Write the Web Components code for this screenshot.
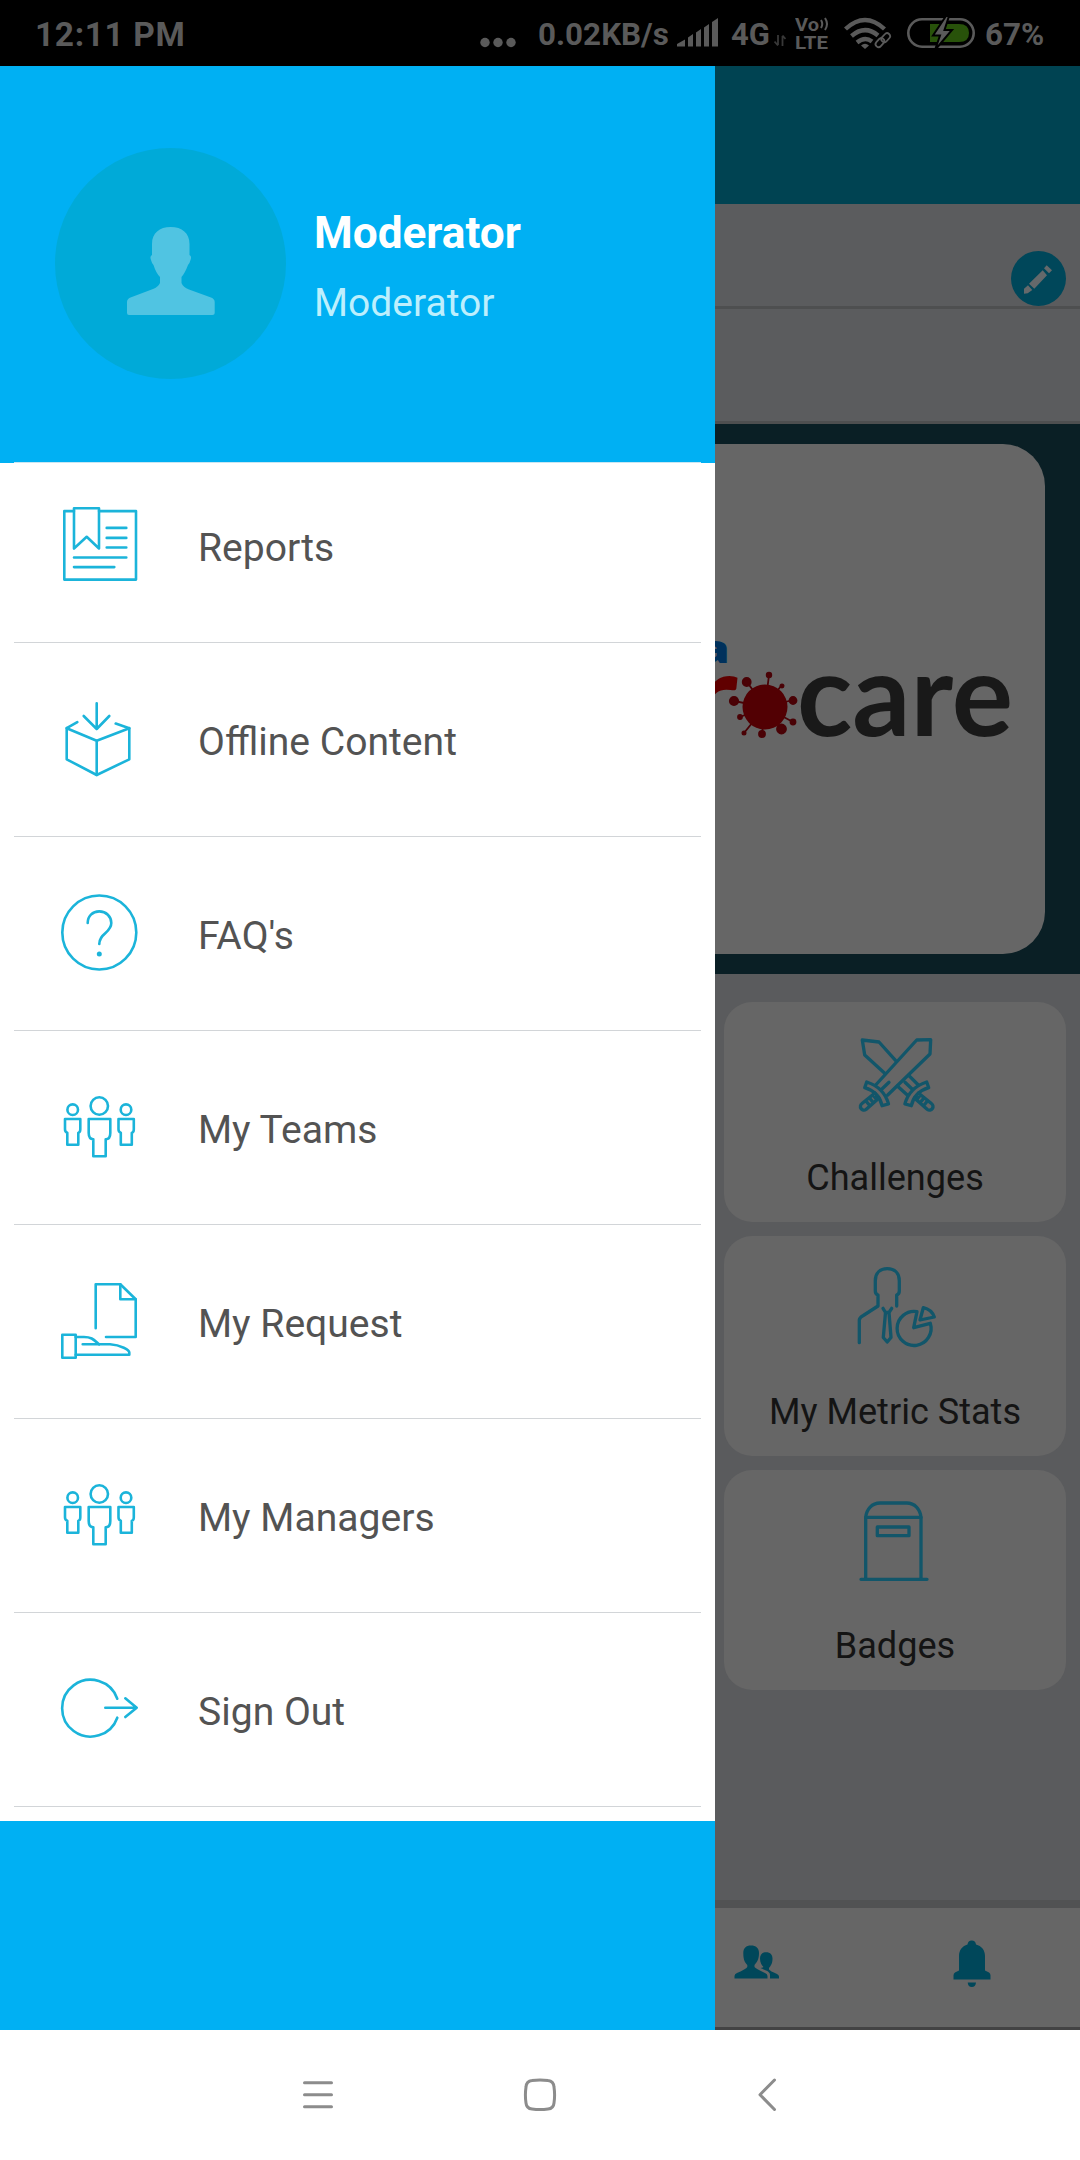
<!DOCTYPE html>
<html lang="en">
<head>
<meta charset="UTF-8">
<meta name="viewport" content="width=device-width, initial-scale=1.0">
<title>Menu</title>
<style>
  body {
    margin: 0;
    font-family: Roboto, "Liberation Sans", sans-serif;
    background: #fff;
  }
</style>
</head>
<body>
<phone-screen>
  <status-bar slot="status"></status-bar>

  <side-drawer slot="drawer">
    <user-card slot="user" name="Moderator" role-name="Moderator"></user-card>
    <menu-item icon="reports">Reports</menu-item>
    <menu-item icon="offline">Offline Content</menu-item>
    <menu-item icon="faq">FAQ's</menu-item>
    <menu-item icon="people">My Teams</menu-item>
    <menu-item icon="request">My Request</menu-item>
    <menu-item icon="people">My Managers</menu-item>
    <menu-item icon="signout">Sign Out</menu-item>
  </side-drawer>

  <home-page slot="page">
    <brand-banner slot="banner"></brand-banner>
    <home-tile icon="swords">Challenges</home-tile>
    <home-tile icon="metrics">My Metric Stats</home-tile>
    <home-tile icon="badges">Badges</home-tile>
  </home-page>

  <system-nav slot="nav"></system-nav>
</phone-screen>

<script>
// Line icons used by the drawer rows and by the tiles
const person = `
  <path d="M5 32H20.3V42.3Q20.3 45.5 18.3 45.7V57.7H7.3V45.7Q5 45 5 42.3Z"/>`;

const ICONS = {
  reports: `
    <path d="M14 6.1H4.3V74.6H76V6.1H39"/>
    <path d="M14 3.2H39V43.5L26.7 31.8L14 43.5Z"/>
    <path d="M46.7 22.9H66.3M46.7 32.9H66.3M46.7 42.5H66.3M14 52.5H66.3M14 62.1H54.3"/>`,
  offline: `
    <path d="M36.7 4.2V30M23.7 17L36.7 30L49.3 17"/>
    <path d="M17.3 23.1L6.7 29.2V60.3L36.7 76L69.3 60.3V29.2L55.7 24.6"/>
    <path d="M6.7 29.2L36.7 41.7L69.3 29.2M36.7 41.7V76"/>`,
  faq: `
    <circle cx="39.3" cy="39.5" r="37"/>
    <path d="M27.7 30C27.7 23 32.5 18.4 39.3 18.4S51.3 23.5 51.3 30C51.3 40 39.3 40 39.3 51"/>
    <circle cx="39.3" cy="61" r="2.5" fill="currentColor" stroke="none"/>`,
  people: `
    <circle cx="39.3" cy="19" r="8.7"/>
    <circle cx="12.7" cy="22.7" r="5.3"/>
    <circle cx="66" cy="22.7" r="5.3"/>
    <path d="M28.7 32H50.3V46Q50.3 52.3 45.7 52.3V69.3H33.3V52.3Q28.7 52 28.7 46Z"/>
    ${person}
    <g transform="translate(53.5 0)">${person}</g>`,
  request: `
    <path d="M35.7 47.3V3.3H60.3L75.7 18.3V56H46"/>
    <path d="M60.3 3.3V18.3H75.7"/>
    <path d="M2.3 53.7H15.7V76.7H2.3Z"/>
    <path d="M15.7 56H24C32 56 34 59 39 63.3"/>
    <path d="M22.7 63.3H50C61 64 69.3 69 69.3 71.5V73.7H15.7"/>`,
  signout: `
    <path d="M57.3 29.7A28.4 28.4 0 1 0 57.3 48.7"/>
    <path d="M45.3 38.7H76.7M65.3 29.3L76.7 38.7L65.3 48"/>`,
  swords: `
    <path d="M20.7 53L61.7 8L75.7 7.7L75 22L32.7 63"/>
    <path d="M40.7 28.7L24 10L7.3 8L9.7 23L29.7 41.3"/>
    <path d="M53.7 43.3L63.3 53M42.3 54L52.3 63M34 50.3L26.7 57.3M50 50.3L57.3 57.3"/>
    <path d="M11.7 50C21 53 30 59 33.5 72L27 73.7C25 64 19 58.5 9.7 55.7Z"/>
    <path d="M71.7 50C62.4 53 53.4 59 49.9 72L56.4 73.7C58.4 64 64.4 58.5 73.7 55.7Z"/>
    <path d="M20 61L7 71.5A3.4 3.4 0 0 0 11 77.5L24 66M11 69L15 74M14.5 66L18.5 71M18 63L22 68"/>
    <path d="M63.4 61L76.4 71.5A3.4 3.4 0 0 1 72.4 77.5L59.4 66M72.4 69L68.4 74M68.9 66L64.9 71M65.4 63L61.4 68"/>`,
  metrics: `
    <path d="M4.3 76.7V54Q4.5 51.5 8.3 49.5L23 40V29Q20.3 28 20.3 25V14.7C20.3 7 25 2.7 32.3 2.7S44.3 7 44.3 14.7V25Q44.3 28 41.7 29V40"/>
    <path d="M28 42.3L30.5 46.5L28.3 71.5L32.2 76L36 71.5L34 46.5L36.7 42.3M30.5 46.5H34"/>
    <path d="M62 45.7A17 17 0 1 0 75.3 57.3L58.7 61.7Z"/>
    <path d="M68.3 41.7L65 54L79.3 51Q76.5 43.5 68.3 41.7Z"/>`,
  badges: `
    <path d="M10.7 79.3V17.3C11.5 9 17 3 25 3H51.7C59.7 3 65.2 9 66 17.3V79.3"/>
    <path d="M10.7 17.3H66M6 79.3H72M22.3 27H54V35.7H22.3Z"/>`
};

// <line-icon name="faq">: picks one of the drawings above
class LineIcon extends HTMLElement {
  constructor() {
    super();
    this.attachShadow({ mode: "open" });
  }

  connectedCallback() {
    this.shadowRoot.innerHTML = `
      <style>
        :host { display: block; width: 80px; height: 84px; }
        svg {
          display: block;
          overflow: visible;
          fill: none;
          stroke: currentColor;
          stroke-width: var(--icon-stroke, 2.6);
          stroke-linecap: round;
          stroke-linejoin: round;
        }
      </style>
      <svg width="80" height="84" viewBox="0 0 80 84">${ICONS[this.getAttribute("name")]}</svg>
    `;
  }
}
customElements.define("line-icon", LineIcon);

class PhoneScreen extends HTMLElement {
  constructor() {
    super();
    this.attachShadow({ mode: "open" });
    this.shadowRoot.innerHTML = `
      <style>
        :host {
          display: flex;
          flex-direction: column;
          width: 1080px;
          height: 2160px;
          overflow: hidden;
        }
        main { display: flex; height: 1964px; }
      </style>
      <slot name="status"></slot>
      <main>
        <slot name="drawer"></slot>
        <slot name="page"></slot>
      </main>
      <slot name="nav"></slot>
    `;
  }
}
customElements.define("phone-screen", PhoneScreen);

class StatusBar extends HTMLElement {
  constructor() {
    super();
    this.attachShadow({ mode: "open" });
  }

  connectedCallback() {
    this.render();
  }

  render() {
    this.shadowRoot.innerHTML = `
      <style>
        :host {
          display: flex;
          box-sizing: border-box;
          justify-content: space-between;
          height: 66px;
          padding: 0 36px 0 35px;
          background: #000;
          color: #5a5a5a;
          font-size: 33.5px;
          font-weight: 700;
          line-height: 69px;
          white-space: nowrap;
        }
        .right { display: flex; }
        span, svg { display: block; flex: none; }
        .time { letter-spacing: 0.6px; }
        .dots { width: 37px; }
        .speed { width: 130px; margin-left: 21px; font-size: 31.4px; }
        .bars { margin-left: 9px; }
        .net { width: 37px; margin-left: 13px; font-size: 31px; }
        .arrows { margin-left: 6px; }
        .volte { margin-left: 9px; }
        .wifi { margin-left: 15px; }
        .battery { margin-left: 15px; }
        .percent { width: 59px; margin-left: 10px; font-size: 31.4px; }
      </style>
      <span class="time">12:11 PM</span>
      <div class="right">
        <svg class="dots" width="37" height="66" fill="currentColor">
          <circle cx="5" cy="42.5" r="4.7"/><circle cx="18" cy="42.5" r="4.7"/><circle cx="31" cy="42.5" r="4.7"/>
        </svg>
        <span class="speed">0.02KB/s</span>
        <svg class="bars" width="41" height="66" fill="currentColor">
          <path d="M0 46.5V44L8 39.500V46.500ZM11 37.500L16 34V46.500H11ZM19 32.500L24 29V46.500H19ZM27 27.500L32 24V46.500H27ZM35 22L41 18V46.500H35Z"/>
        </svg>
        <span class="net">4G</span>
        <svg class="arrows" width="12" height="66" stroke="#383838" stroke-width="1.8" fill="none">
          <path d="M4 35V45M0.500 41.500L4 45.500M8.500 46V36M8.500 35.500L11.500 39"/>
        </svg>
        <svg class="volte" width="34" height="66" fill="currentColor">
          <text x="0" y="31" font-size="18" textLength="24" lengthAdjust="spacingAndGlyphs">Vo</text>
          <text x="0" y="48.500" font-size="18.500" textLength="33" lengthAdjust="spacingAndGlyphs">LTE</text>
          <path d="M26 20Q28.500 24 26 28M30 18Q34 24 30 30" fill="none" stroke="currentColor" stroke-width="2"/>
        </svg>
        <svg class="wifi" width="48" height="66" fill="none" stroke="currentColor" stroke-width="4.400">
          <path d="M1.500 29Q21 11 40.500 29M7.500 36Q21 24.500 34 35.500M13 42.500Q21 36 28 41.500"/>
          <path d="M17 45.500Q21 42 25 45.500L21 49Z" fill="currentColor" stroke="none"/>
          <g stroke-width="1.800" transform="rotate(-48 39 40)">
            <rect x="30" y="36.500" width="10" height="6" rx="3"/>
            <rect x="37.500" y="37.500" width="10" height="6" rx="3"/>
          </g>
        </svg>
        <svg class="battery" width="68" height="66">
          <path d="M23 24H52Q62 24 62 33T52 42H23Z" fill="#28520a"/>
          <rect x="1.300" y="19.300" width="65.400" height="27.400" rx="13.700" fill="none" stroke="currentColor" stroke-width="2.600"/>
          <path d="M39 16L26 35.500H33L28 50L45 30H37.500L42 16Z" fill="currentColor" stroke="#000" stroke-width="2"/>
        </svg>
        <span class="percent">67%</span>
      </div>
    `;
  }
}
customElements.define("status-bar", StatusBar);

class SideDrawer extends HTMLElement {
  constructor() {
    super();
    this.attachShadow({ mode: "open" });
    this.shadowRoot.innerHTML = `
      <style>
        :host {
          display: flex;
          flex: none;
          flex-direction: column;
          width: 715px;
          background: #00b0f3;
        }
        nav {
          display: flex;
          flex-direction: column;
          background: #fff;
          padding-bottom: 14px;
        }
      </style>
      <slot name="user"></slot>
      <nav><slot></slot></nav>
    `;
  }
}
customElements.define("side-drawer", SideDrawer);

class UserCard extends HTMLElement {
  constructor() {
    super();
    this.attachShadow({ mode: "open" });
  }

  connectedCallback() {
    this.render();
  }

  render() {
    this.shadowRoot.innerHTML = `
      <style>
        :host {
          display: flex;
          flex-direction: column;
          height: 397px;
        }
        .row {
          display: flex;
          flex: 1;
          align-items: flex-start;
          gap: 28px;
          padding: 82px 0 0 55px;
        }
        .avatar {
          display: flex;
          justify-content: center;
          width: 231px;
          height: 231px;
          border-radius: 50%;
          background: #00aad8;
        }
        svg { margin-top: 79px; }
        .text { padding-top: 55px; }
        p { margin: 0; }
        .name {
          color: #fff;
          font-size: 44.2px;
          font-weight: 700;
          line-height: 60px;
        }
        .role {
          margin-top: 12px;
          color: #bdeffd;
          font-size: 39px;
          line-height: 56px;
        }
        .line { height: 1px; margin: 0 14px; background: #c9e6f2; }
      </style>
      <div class="row">
        <div class="avatar">
          <svg width="88" height="88" viewBox="0 0 88 88" fill="#50c4e2">
            <path d="M43.700 0C55 0 62.500 6 62.500 17V28Q65 29 63.500 33Q62.500 37 61 38Q58 46 54.500 50V56Q56 60 62 62.500L84 70.500Q87.700 72 87.700 75V86Q87.700 88 85.500 88H2Q0 88 0 86V75Q0 72 3.500 70.500L26 62Q31 60 33 56V50Q29 46 26.500 38Q25 37 24 33Q22.500 29 25 28V17C25 6 32.500 0 43.700 0Z"/>
          </svg>
        </div>
        <div class="text">
          <p class="name">${this.getAttribute("name")}</p>
          <p class="role">${this.getAttribute("role-name")}</p>
        </div>
      </div>
      <div class="line"></div>
    `;
  }
}
customElements.define("user-card", UserCard);

class MenuItem extends HTMLElement {
  constructor() {
    super();
    this.attachShadow({ mode: "open" });
  }

  connectedCallback() {
    this.render();
  }

  render() {
    this.shadowRoot.innerHTML = `
      <style>
        :host {
          display: flex;
          box-sizing: border-box;
          align-items: flex-end;
          height: 194px;
          margin: 0 14px;
          padding: 0 0 53px 46px;
          border-bottom: 1px solid #d2d5d8;
          color: #535353;
          font-size: 39.1px;
          line-height: 71px;
        }
        :host(:first-of-type) { height: 180px; }
        line-icon { color: #1bb4da; }
        span { margin: 0 0 5px 58px; white-space: nowrap; }
      </style>
      <line-icon name="${this.getAttribute("icon")}"></line-icon>
      <span><slot></slot></span>
    `;
  }
}
customElements.define("menu-item", MenuItem);

class HomePage extends HTMLElement {
  constructor() {
    super();
    this.attachShadow({ mode: "open" });
    this.shadowRoot.innerHTML = `
      <style>
        :host {
          display: flex;
          flex: 1;
          flex-direction: column;
          background: #5a5b5d;
        }
        .toolbar { height: 138px; background: #004352; }
        .profile {
          display: flex;
          box-sizing: border-box;
          align-items: flex-end;
          justify-content: flex-end;
          height: 105px;
          padding: 0 14px 3px;
          border-bottom: 3px solid #4e4f50;
          background: #5b5c5e;
        }
        .profile svg { margin-bottom: -3px; }
        .points {
          box-sizing: border-box;
          height: 115px;
          border-bottom: 3px solid #4e4f50;
          background: #5b5c5e;
        }
        .tiles {
          display: flex;
          flex: 1;
          flex-direction: column;
          gap: 14px;
          padding: 28px 14px 0 9px;
        }
        footer {
          display: flex;
          box-sizing: border-box;
          justify-content: space-between;
          height: 130px;
          padding: 0 89px 0 19px;
          border-top: 8px solid #515253;
          border-bottom: 3px solid #434344;
          background: #666;
          fill: #00475a;
        }
        .friends { margin-top: 37px; }
        .bell { margin-top: 32px; }
      </style>
      <div class="toolbar"></div>
      <div class="profile">
        <svg width="55" height="55" viewBox="0 0 55 55">
          <circle cx="27.500" cy="27.500" r="27.500" fill="#00475a"/>
          <path fill="#65696b" d="M35.700 14.300L41 19.300L38 22.300L33 17.300ZM31.700 19.300L36 24.300L23.300 37.700L18 32.700ZM17 34.300L21.300 39L16.700 42.300L13 42.700V37.700Z"/>
        </svg>
      </div>
      <div class="points"></div>
      <slot name="banner"></slot>
      <div class="tiles"><slot></slot></div>
      <footer>
        <svg class="friends" width="46" height="34" viewBox="0 0 46 34">
          <path d="M17 0.500C22 0.500 25 3 25 8C25 15 22.500 17.500 20.500 20V22Q22 24 31 28Q33.500 29 33.500 31V33.500H0.500V31Q0.500 29 3 28Q12 24 13.300 22V20C11 17.500 9.300 15 9.300 8C9.300 3 12 0.500 17 0.500Z"/>
          <path d="M32 7.300C36.500 7.300 38.500 10 38.500 13.500C38.500 19 36.500 21 35 23V24.500Q36 26 43 29Q45 30 45 31.500V33.500H36V30Q36 27 32 25.500L26.500 23Q29.500 22.500 29.500 22C27.500 20 26 17.500 26 13.500C26 10 28 7.300 32 7.300Z"/>
        </svg>
        <svg class="bell" width="38" height="48" viewBox="0 0 38 48">
          <path d="M18.700 0.500Q22.500 0.500 23 4.500C28.500 6 32 10 32 16V30.500L36 32.500Q37.500 33.500 37.500 35.500V39.500H0.500V35.500Q0.500 33.500 2 32.500L6 30.500V16C6 10 9.500 6 14.500 4.500Q15 0.500 18.700 0.500Z"/>
          <path d="M14.700 42.500H23Q22.500 47 18.800 47T14.700 42.500Z"/>
        </svg>
      </footer>
    `;
  }
}
customElements.define("home-page", HomePage);

// Banner card with the logo; its left part goes under the drawer
class BrandBanner extends HTMLElement {
  constructor() {
    super();
    this.attachShadow({ mode: "open" });
  }

  connectedCallback() {
    this.render();
  }

  render() {
    this.shadowRoot.innerHTML = `
      <style>
        :host {
          display: block;
          box-sizing: border-box;
          height: 550px;
          padding: 20px 35px 20px 0;
          background: #0a1f25;
        }
        .card {
          height: 510px;
          overflow: hidden;
          border-radius: 0 42px 42px 0;
          background: #666;
        }
        svg { display: block; }
      </style>
      <div class="card">
        <svg width="330" height="510" viewBox="0 0 330 510">
          <text x="-18" y="218.500" font-family="Open Sans" font-weight="800" font-size="38" textLength="33" lengthAdjust="spacingAndGlyphs" fill="#00315c">a</text>
          <text x="-30" y="292" font-family="Lato" font-weight="700" font-size="114" textLength="53" lengthAdjust="spacingAndGlyphs" fill="#600000">r</text>
          <g stroke="#4a0206" stroke-width="1.800" fill="#4a0206">
            <path d="M50 263L54 231M50 263L32 238M50 263L66 242M50 263L19 257M50 263L78 256M50 263L25 273M50 263L78 278M50 263L66 285M50 263L29 289M50 263L47 290"/>
            <circle cx="54" cy="231" r="2.300"/><circle cx="31.700" cy="238" r="4"/><circle cx="67" cy="242" r="1.600"/>
            <circle cx="19" cy="257" r="4.200"/><circle cx="78" cy="256.500" r="3.500"/><circle cx="25" cy="273" r="2"/>
            <circle cx="78" cy="278" r="2.500"/><circle cx="66.500" cy="285" r="4.500"/><circle cx="29" cy="289" r="1.600"/>
            <circle cx="47" cy="290" r="3"/>
          </g>
          <circle cx="50" cy="263" r="22.500" fill="#520003"/>
          <text x="82" y="292" font-family="Lato" font-weight="700" font-size="114" textLength="216" lengthAdjust="spacingAndGlyphs" fill="#191919">care</text>
        </svg>
      </div>
    `;
  }
}
customElements.define("brand-banner", BrandBanner);

class HomeTile extends HTMLElement {
  constructor() {
    super();
    this.attachShadow({ mode: "open" });
  }

  connectedCallback() {
    this.render();
  }

  render() {
    this.shadowRoot.innerHTML = `
      <style>
        :host {
          display: flex;
          box-sizing: border-box;
          flex-direction: column;
          align-items: center;
          height: 220px;
          padding-top: 30px;
          border-radius: 28px;
          background: #666;
          color: #141414;
          font-size: 36.1px;
          line-height: 50px;
          --icon-stroke: 3.3;
        }
        line-icon { color: #12566a; }
        span { margin-top: 37px; white-space: nowrap; }
      </style>
      <line-icon name="${this.getAttribute("icon")}"></line-icon>
      <span><slot></slot></span>
    `;
  }
}
customElements.define("home-tile", HomeTile);

class SystemNav extends HTMLElement {
  constructor() {
    super();
    this.attachShadow({ mode: "open" });
    this.shadowRoot.innerHTML = `
      <style>
        :host {
          display: flex;
          box-sizing: border-box;
          align-items: center;
          height: 130px;
          padding-left: 302px;
          background: #fff;
        }
        svg {
          fill: none;
          stroke: #8c8c8c;
          stroke-width: 3;
          stroke-linecap: round;
          stroke-linejoin: round;
        }
        .home { margin: 0 200px 0 189px; }
      </style>
      <svg width="32" height="34"><path d="M2.500 4.700H29.500M2.500 16.700H29.500M2.500 28.700H29.500"/></svg>
      <svg class="home" width="34" height="34"><path d="M9 2.500Q17 1.300 25 2.500Q30.500 3 31 9Q32.200 17 31 25Q30.500 30.500 25 31Q17 32.200 9 31Q3.500 30.500 3 25Q1.800 17 3 9Q3.500 3 9 2.500Z"/></svg>
      <svg width="20" height="34"><path d="M17.500 2L3 16.700L17.500 31.500"/></svg>
    `;
  }
}
customElements.define("system-nav", SystemNav);
</script>
</body>
</html>
